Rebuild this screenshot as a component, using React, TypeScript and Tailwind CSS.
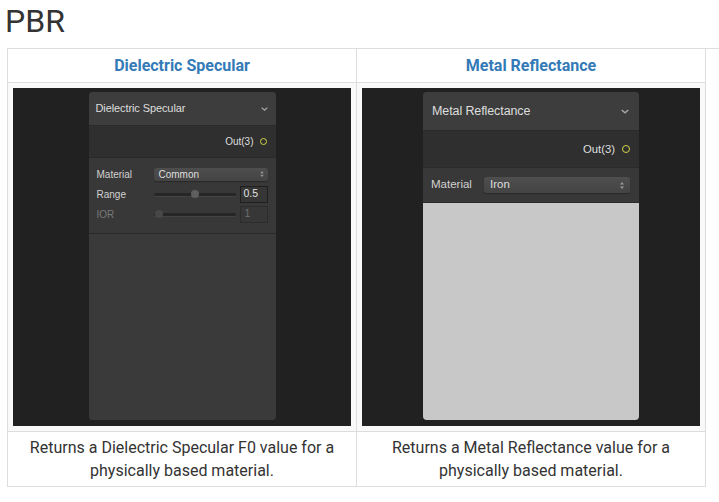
import React from "react";

function Chevron({ w = 7, h = 4 }: { w?: number; h?: number }) {
  return (
    <svg width={w} height={h} viewBox="0 0 7 4" className="block">
      <polyline points="0.6,0.6 3.5,3.2 6.4,0.6" fill="none" stroke="#a8a8a8" strokeWidth="1.2" />
    </svg>
  );
}

function UpDown({ h = 7 }: { h?: number }) {
  return (
    <svg width={4} height={h} viewBox="0 0 4 7" className="block">
      <polygon points="2,0 4,2.6 0,2.6" fill="#9a9a9a" />
      <polygon points="0,4.4 4,4.4 2,7" fill="#9a9a9a" />
    </svg>
  );
}

function Slider({ pos, dim }: { pos: number; dim?: boolean }) {
  return (
    <div className="relative flex-1 h-[8px] flex items-center">
      <div className="w-full h-[3px] rounded-full bg-[#262626] shadow-[0_1px_0_#444]" />
      <div
        className={dim ? "absolute top-0 w-[8px] h-[8px] rounded-full bg-[#474747]" : "absolute top-0 w-[8px] h-[8px] rounded-full bg-[#5e5e5e]"}
        style={{ left: pos }}
      />
    </div>
  );
}

function LeftCard() {
  return (
    <div className="w-[338px] h-[338px] bg-[#212121] flex justify-center pt-[4px]">
      <div className="w-[187px] h-[328px] rounded-[4px] bg-[#3a3a3a] flex flex-col overflow-hidden font-['Liberation_Sans',Arial,sans-serif]">
        <div className="h-[34px] shrink-0 flex items-center justify-between pl-[7px] pr-[8px] bg-[#3d3d3d] border-b border-[#2a2a2a] text-[11px] text-[#dedede] tracking-[-0.1px]">
          <span>Dielectric Specular</span>
          <Chevron />
        </div>
        <div className="h-[31px] shrink-0 flex items-center justify-end gap-[6px] pr-[9px] bg-[#2f2f2f] text-[10px] text-[#dedede]">
          <span>Out(3)</span>
          <div className="w-[7px] h-[7px] rounded-full border-[1.5px] border-[#d4d447]" />
        </div>
        <div className="h-[77px] shrink-0 bg-[#383838] border-t border-b border-[#2a2a2a] pt-[6px] pl-[8px] pr-[8px] flex flex-col text-[10px]">
          <div className="h-[20px] flex items-center">
            <span className="w-[57px] text-[#d2d2d2]">Material</span>
            <div className="flex-1 h-[13px] rounded-[3px] bg-linear-to-b from-[#4e4e4e] to-[#444] shadow-[0_1px_1px_#2a2a2a] flex items-center justify-between pl-[5px] pr-[4px] text-[#dedede]">
              <span>Common</span>
              <UpDown h={6} />
            </div>
          </div>
          <div className="h-[20px] flex items-center gap-[4px]">
            <span className="w-[53px] text-[#d2d2d2]">Range</span>
            <Slider pos={37} />
            <div className="w-[28px] h-[17px] border border-[#1f1f1f] bg-[#363636] pl-[3px] flex items-center text-[10.5px] text-[#e0e0e0]">0.5</div>
          </div>
          <div className="h-[20px] flex items-center gap-[4px]">
            <span className="w-[53px] text-[#7a7a7a]">IOR</span>
            <Slider pos={1} dim />
            <div className="w-[28px] h-[17px] border border-[#2c2c2c] bg-[#373737] pl-[4px] flex items-center text-[10.5px] text-[#707070]">1</div>
          </div>
        </div>
        <div className="flex-1 bg-[#3a3a3a]" />
      </div>
    </div>
  );
}

function RightCard() {
  return (
    <div className="w-[338px] h-[338px] bg-[#212121] flex justify-center pt-[4px]">
      <div className="w-[216px] h-[328px] rounded-[4px] bg-[#3a3a3a] flex flex-col overflow-hidden font-['Liberation_Sans',Arial,sans-serif]">
        <div className="h-[39px] shrink-0 flex items-center justify-between pl-[9px] pr-[10px] bg-[#3d3d3d] border-b border-[#2a2a2a] text-[12.5px] text-[#dedede] tracking-[-0.1px]">
          <span>Metal Reflectance</span>
          <Chevron w={8} h={5} />
        </div>
        <div className="h-[36px] shrink-0 flex items-center justify-end gap-[7px] pr-[9px] bg-[#2f2f2f] text-[11.3px] text-[#dedede]">
          <span>Out(3)</span>
          <div className="w-[8px] h-[8px] rounded-full border-[1.5px] border-[#d4d447]" />
        </div>
        <div className="h-[36px] shrink-0 bg-[#383838] border-t border-b border-[#2a2a2a] pl-[8px] pr-[9px] flex items-center text-[11.5px]">
          <span className="w-[53px] text-[#d2d2d2]">Material</span>
          <div className="flex-1 h-[16px] rounded-[3px] bg-linear-to-b from-[#4e4e4e] to-[#444] shadow-[0_1px_1px_#2a2a2a] flex items-center justify-between pl-[6px] pr-[6px] text-[#dedede]">
            <span>Iron</span>
            <UpDown h={7} />
          </div>
        </div>
        <div className="flex-1 bg-[#c8c8c8]" />
      </div>
    </div>
  );
}

export default function App() {
  return (
    <div className="w-[719px] h-[502px] bg-white font-['Roboto',sans-serif] text-[#333]">
      <div className="pl-[5px] pt-[1px] text-[32px] leading-[40px]">PBR</div>
      <div className="ml-[7px] mt-[7px] grid grid-cols-[349px_349px] border-l border-t border-[#dddddd]">
        <div className="h-[34px] border-r border-b border-[#dddddd] flex items-center justify-center text-[16px] font-bold text-[#337ab7]">
          Dielectric Specular
        </div>
        <div className="h-[34px] border-r border-b border-[#dddddd] flex items-center justify-center text-[16px] font-bold text-[#337ab7]">
          Metal Reflectance
        </div>
        <div className="p-[5px] bg-[#f9f9f9] border-r border-b border-[#dddddd]">
          <LeftCard />
        </div>
        <div className="p-[5px] bg-[#f9f9f9] border-r border-b border-[#dddddd]">
          <RightCard />
        </div>
        <div className="h-[55px] py-[4px] border-r border-b border-[#dddddd] text-center text-[16px] leading-[23px]">
          Returns a Dielectric Specular F0 value for a
          <br />
          physically based material.
        </div>
        <div className="h-[55px] py-[4px] border-r border-b border-[#dddddd] text-center text-[16px] leading-[23px]">
          Returns a Metal Reflectance value for a
          <br />
          physically based material.
        </div>
      </div>
    </div>
  );
}
